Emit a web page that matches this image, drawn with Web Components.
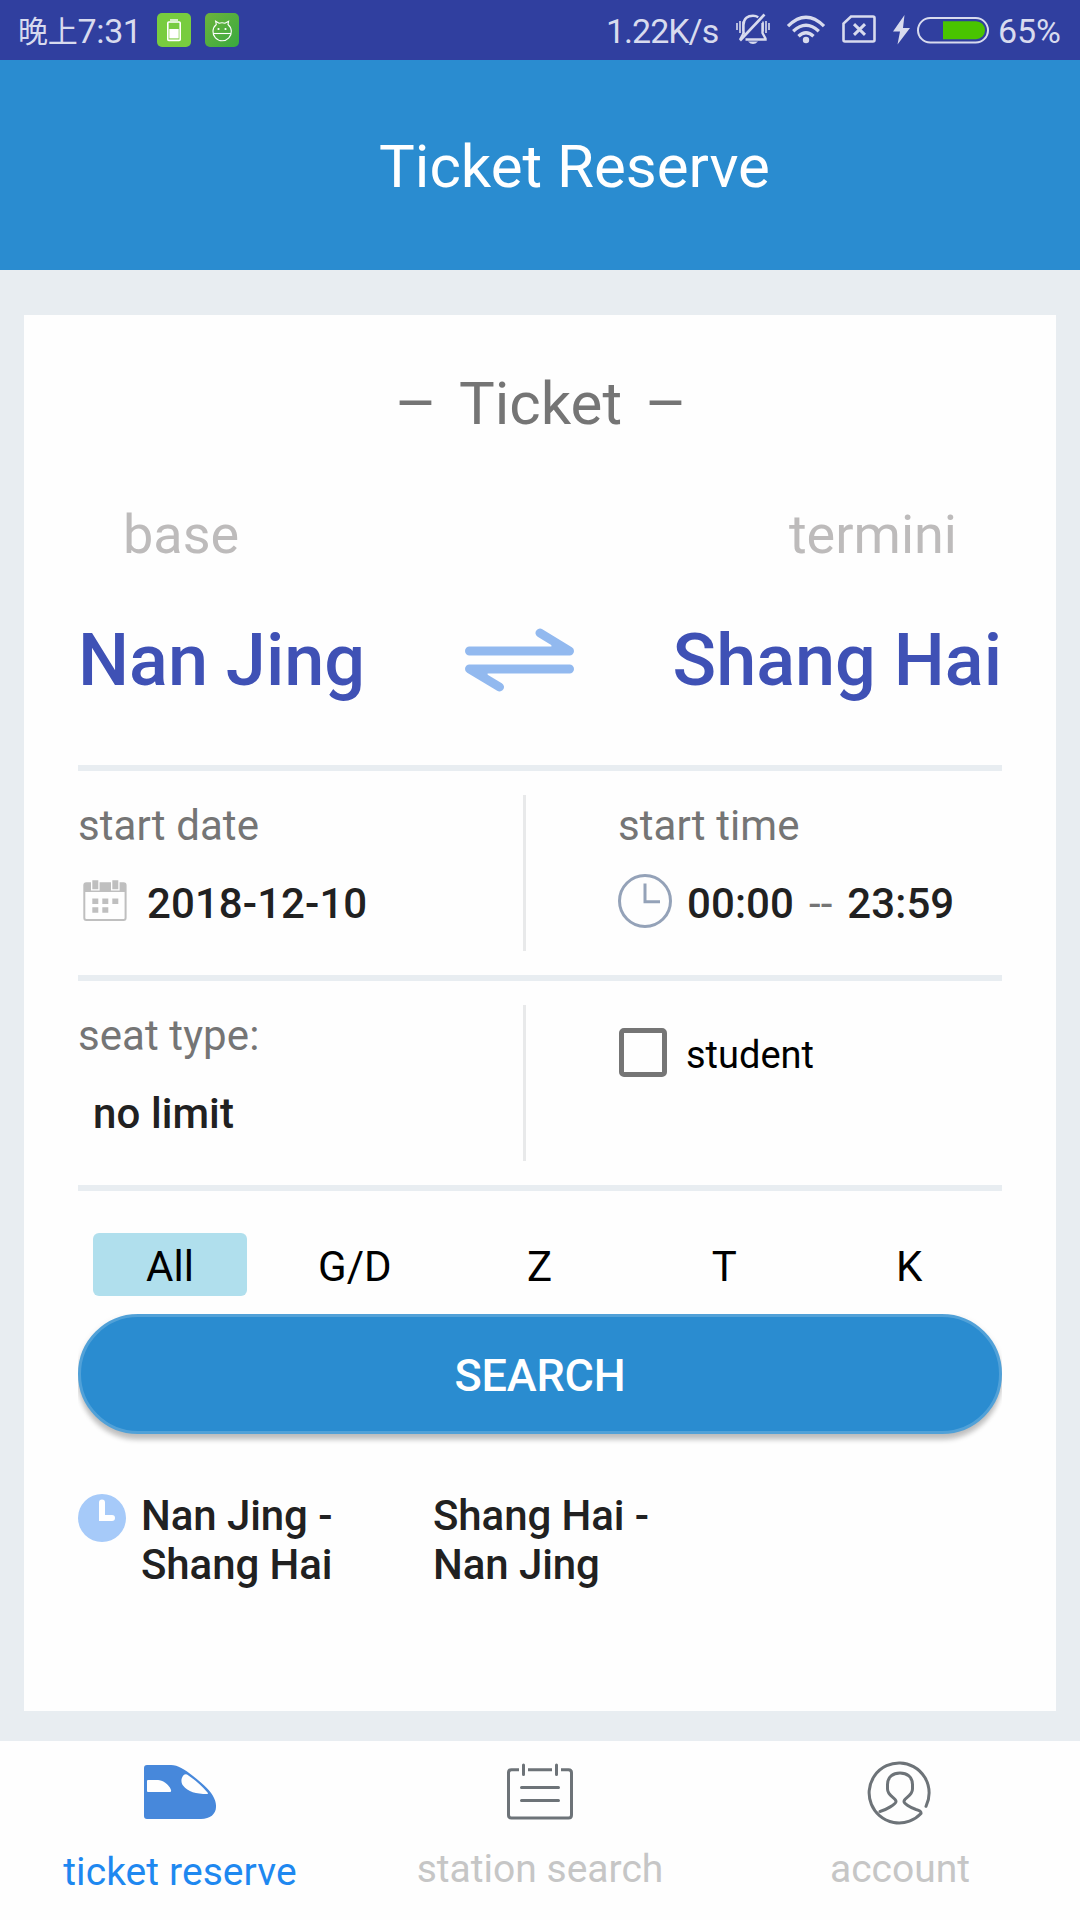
<!DOCTYPE html>
<html lang="en">
<head>
<meta charset="utf-8">
<title>Ticket Reserve</title>
<style>
html, body { margin: 0; padding: 0; }
body { width: 1080px; height: 1920px; overflow: hidden; background: #e8edf1; font-family: Roboto, "Noto Sans CJK SC", sans-serif; }
</style>
</head>
<body>
<ticket-app></ticket-app>
<script>
function define(name, html) {
  const template = document.createElement('template');
  template.innerHTML = html;
  customElements.define(name, class extends HTMLElement {
    constructor() {
      super();
      this.attachShadow({ mode: 'open' }).appendChild(template.content.cloneNode(true));
    }
  });
}

define('status-bar', `
<style>
:host { display: flex; align-items: center; height: 60px; box-sizing: border-box; background: #303f9f; color: #d8dbee; font-size: 34px; line-height: 60px; white-space: nowrap; }
svg { display: block; flex: none; }
.clock { display: flex; width: 119px; margin-left: 18px; padding-top: 1px; }
.zh { font-family: "Noto Sans CJK SC", sans-serif; font-size: 30px; line-height: 57px; width: 60px; letter-spacing: -0.2px; }
.num { letter-spacing: -0.4px; }
.speed { margin-left: auto; width: 116px; padding-top: 2px; letter-spacing: -1px; }
.pct { width: 65px; margin: 0 17px 0 9px; padding-top: 2px; letter-spacing: -0.1px; }
</style>
<div class="clock"><span class="zh">晚上</span><span class="num">7:31</span></div>
<svg style="margin-left:20px" width="34" height="34" viewBox="0 0 34 34"><rect width="34" height="34" rx="5" fill="#78cc3f"/><rect x="10.800" y="9" width="12.400" height="18.400" rx="1" fill="none" stroke="#fff" stroke-width="1.600"/><path d="M13 7h8" stroke="#fff" stroke-width="1.400"/><rect x="12.300" y="16" width="9.400" height="9.400" fill="#fff"/></svg>
<svg style="margin-left:14px" width="34" height="34" viewBox="0 0 34 34"><defs><linearGradient id="g" x1="0" y1="0" x2="1" y2="1"><stop offset="0" stop-color="#6db33b"/><stop offset="1" stop-color="#38aa40"/></linearGradient></defs><rect width="34" height="34" rx="5" fill="url(#g)"/><g fill="none" stroke="#fff" stroke-width="1.100"><path d="M11.300 11.500 10.600 8.200 14 10.200Q17 9.200 20 10.200L23.600 8.200 23 11.500A9.200 9.200 0 1 1 11.300 11.500Z"/><path d="M8.300 20.500H25.900"/></g><circle cx="13.500" cy="16" r="1.100" fill="#fff"/><circle cx="20.500" cy="16" r="1.100" fill="#fff"/></svg>
<span class="speed">1.22K/s</span>
<svg style="margin-left:14px" width="34" height="34" viewBox="0 0 34 34" fill="none" stroke="#d8dbee"><path d="M1 10v7M4 8v12M7 8.500v10M33 10v7M30 8v12M27 8.500v10" stroke-width="1.600"/><path d="M7.500 21V12C7.500 5 12 2.800 17 2.800Q20 2.800 22.300 4.200M26.500 10V20L29.500 25.500V26.500H9.500" stroke-width="2.400"/><path d="M28.500 1.500 4 27.500" stroke-width="2.600"/><path d="M4 26.500 8 19" stroke-width="2"/><path d="M12 28.500H22Q17 33.500 12 28.500Z" fill="#d8dbee" stroke="none"/></svg>
<svg style="margin-left:16px" width="40" height="34" viewBox="0 0 40 34" fill="none" stroke="#d8dbee" stroke-width="3.300"><path d="M2 13.200Q20-4.600 38 13.200M7.200 18.200Q20 6.200 32.800 18.200M12.500 23.200Q20 16.200 27.500 23.200"/><circle cx="20" cy="27" r="3.200" fill="#d8dbee" stroke="none"/></svg>
<svg style="margin-left:16px" width="34" height="34" viewBox="0 0 34 34" fill="none" stroke="#d8dbee"><path d="M9 3.500H31Q32.500 3.500 32.500 5V27Q32.500 28.500 31 28.500H3Q1.500 28.500 1.500 27V10.500Z" stroke-width="2.600"/><path d="M12 11.200 23 21.800M23 11.200 12 21.800" stroke-width="3"/></svg>
<svg style="margin-left:17px" width="17" height="34" viewBox="0 0 17 34"><path d="M11.500 2 0 18.500H7L4.500 31.500 17 15H10Z" fill="#d8dbee"/></svg>
<svg style="margin-left:7px" width="72" height="34" viewBox="0 0 72 34"><rect x="1" y="5" width="70" height="24.500" rx="12.250" fill="none" stroke="#d8dbee" stroke-width="2"/><path d="M26 8.200H59A9 9 0 0 1 59 26.200H26Z" fill="#49c400"/></svg>
<span class="pct">65%</span>
`);

define('app-header', `
<style>
:host { display: flex; align-items: center; justify-content: center; height: 210px; box-sizing: border-box; padding: 3px 0 0 69px; background: #2a8cd0; color: #fff; font-size: 60px; line-height: 70px; }
</style>
<slot></slot>
`);

define('swap-icon', `
<style>:host { display: block; margin: 0 0 2px 1px; } svg { display: block; }</style>
<svg width="109" height="66" viewBox="0 0 109 66" fill="none" stroke="#92b9ef" stroke-width="9" stroke-linecap="round" stroke-linejoin="round"><path d="M4.500 24H104.500L75 6M104.500 42H4.500L34.500 60"/><path d="M90 19 98 24M11 42 19 47" stroke-width="7"/></svg>
`);

define('calendar-icon', `
<style>:host { display: block; } svg { display: block; }</style>
<svg width="54" height="54" viewBox="0 0 54 54"><path d="M6.300 9H47.500V18H6.300Z" fill="#bfbfbf"/><rect x="6.300" y="9.300" width="41.300" height="36.800" rx="2" fill="none" stroke="#bfbfbf" stroke-width="2"/><path d="M13 6h8.600v10.500H13ZM33 6h8.600v10.500H33Z" fill="#fefefe"/><path d="M14.300 6.300h6v9h-6ZM34.300 6.300h6v9h-6ZM14.300 24.500h6v5.500h-6ZM24.300 24.500h6v5.500h-6ZM34.300 24.500h6v5.500h-6ZM14.300 33.300h6v5.500h-6ZM24.300 33.300h6v5.500h-6Z" fill="#bfbfbf"/></svg>
`);

define('clock-icon', `
<style>:host { display: block; } svg { display: block; }</style>
<svg width="54" height="54" viewBox="0 0 54 54" fill="none" stroke="#94a2b8" stroke-width="3"><circle cx="27" cy="27" r="25.500"/><path d="M27 9.500V27.700H42"/></svg>
`);

define('info-row', `
<style>
:host { display: flex; height: 204px; box-sizing: border-box; }
.left { width: 445px; }
.bar { width: 3px; margin: 24px 0; background: #e8e9ea; }
.right { flex: 1; padding-left: 92px; }
</style>
<div class="left"><slot name="left"></slot></div><div class="bar"></div><div class="right"><slot name="right"></slot></div>
`);

define('info-field', `
<style>
:host { display: flex; flex-direction: column; gap: 29px; padding-top: 30px; font-size: 42px; line-height: 49px; color: #757575; letter-spacing: 0.08px; }
.value { display: flex; align-items: center; gap: 15px; height: 49px; white-space: nowrap; }
::slotted([slot=icon]) { margin-bottom: 6px; }
::slotted(b) { font-weight: 500; color: #212121; }
</style>
<div><slot name="label"></slot></div><div class="value"><slot name="icon"></slot><slot></slot></div>
`);

define('check-field', `
<style>
:host { display: flex; align-items: center; height: 146px; color: #000; font-size: 38px; line-height: 45px; }
.box { width: 48px; height: 49px; box-sizing: border-box; border: 5px solid #757575; border-radius: 5px; margin: 0 19px 4px 1px; }
.text { padding-top: 2px; }
</style>
<div class="box"></div><div class="text"><slot></slot></div>
`);

define('type-chips', `
<style>
:host { display: flex; margin-top: 42px; height: 63px; }
::slotted(span) { flex: 1; margin: 0 15.800px 0 15px; box-sizing: border-box; padding-top: 4px; line-height: 59px; text-align: center; font-size: 42px; color: #000; border-radius: 6px; }
::slotted(span.on) { background: #b0dfed; }
</style>
<slot></slot>
`);

define('search-button', `
<style>
:host { display: block; margin-top: 18px; height: 150px; overflow: hidden; }
button { display: block; width: 100%; height: 120px; box-sizing: border-box; padding: 3px 0 0; border: 3px solid #51a1d8; border-radius: 60px; background: #2a8cd0; box-shadow: 0 6px 5px rgba(0,0,0,.2), 0 2px 6px rgba(0,0,0,.1); color: #fff; font: 500 45px/110px Roboto, sans-serif; letter-spacing: -0.200px; text-align: center; }
</style>
<button><slot></slot></button>
`);

define('route-history', `
<style>
:host { display: flex; margin-top: 27px; color: #212121; font-size: 42px; line-height: 49px; font-weight: 500; letter-spacing: -0.080px; }
svg { display: block; margin: 3px 15px 0 0; flex: none; }
::slotted(span) { display: block; width: 222px; margin-right: 70px; }
</style>
<svg width="48" height="48" viewBox="0 0 48 48"><circle cx="24" cy="24" r="24" fill="#a6caf9"/><path d="M24 8.500V24H34" fill="none" stroke="#fff" stroke-width="6" stroke-linecap="round"/></svg>
<slot></slot>
`);

define('ticket-card', `
<style>
:host { display: flex; flex-direction: column; margin: 45px 24px 30px; height: 1396px; box-sizing: border-box; padding: 0 54px; background: #fefefe; }
.heading { display: flex; align-items: center; justify-content: center; gap: 24px; height: 177px; box-sizing: border-box; padding-left: 1px; font-size: 60px; line-height: 70px; color: #757575; }
.dash { transform: scaleX(1.080); }
.labels { display: flex; align-items: center; justify-content: space-between; height: 85px; padding: 0 45px; font-size: 54px; line-height: 64px; color: #bdbbbb; }
.cities { display: flex; align-items: center; justify-content: space-between; height: 167px; margin-bottom: 21px; font-size: 72px; font-weight: 500; line-height: 84px; color: #3f51b5; }
hr { flex: none; width: 100%; height: 6px; margin: 0; border: 0; background: #e8edf1; }
.indent { margin-left: 15px; }
</style>
<div class="heading"><span class="dash">–</span><span>Ticket</span><span class="dash">–</span></div>
<div class="labels"><span>base</span><span>termini</span></div>
<div class="cities"><span>Nan Jing</span><swap-icon></swap-icon><span>Shang Hai</span></div>
<hr>
<info-row>
  <info-field slot="left"><span slot="label">start date</span><calendar-icon slot="icon"></calendar-icon><b>2018-12-10</b></info-field>
  <info-field slot="right"><span slot="label">start time</span><clock-icon slot="icon"></clock-icon><b>00:00</b><span>--</span><b>23:59</b></info-field>
</info-row>
<hr>
<info-row>
  <info-field slot="left"><span slot="label">seat type:</span><b class="indent">no limit</b></info-field>
  <check-field slot="right">student</check-field>
</info-row>
<hr>
<type-chips><span class="on">All</span><span>G/D</span><span>Z</span><span>T</span><span>K</span></type-chips>
<search-button>SEARCH</search-button>
<route-history><span>Nan Jing - Shang Hai</span><span>Shang Hai - Nan Jing</span></route-history>
`);

define('tab-item', `
<style>
:host { display: flex; flex-direction: column; align-items: center; flex: 1; padding-top: 19px; font-size: 39px; line-height: 47px; color: #c6c6c6; }
:host([active]) { color: #1e88f0; letter-spacing: 0.080px; }
.label { margin-top: 20px; }
:host([active]) .label { margin-top: 23px; }
</style>
<slot name="icon"></slot><div class="label"><slot></slot></div>
`);

define('tab-bar', `
<style>
:host { display: flex; height: 179px; background: #fefefe; }
svg { display: block; }
</style>
<tab-item active>
  <svg slot="icon" width="72" height="66" viewBox="0 0 72 66"><path fill-rule="evenodd" fill="#4788db" d="M3 5H27C34 5 40 9 49 16C58 23 67 31 70 38C72 42 72 45 72 47C72 54 66 59 57 59H3Q0 59 0 56V8Q0 5 3 5ZM3 21V31Q3 32 4 32H26Q27.500 32 27 30C25 24 18 20 14 20H4Q3 20 3 21ZM40.500 14.500C37 17 36.500 22 39 25.500C44 32 52 34 63 34Q64.500 34 63.500 32.500C56 24 50 19 43 14.500Q42 14 40.500 14.500Z"/></svg>ticket reserve
</tab-item>
<tab-item>
  <svg slot="icon" width="68" height="66" viewBox="0 0 68 66" fill="none" stroke="#6d7378" stroke-width="3" stroke-linecap="round"><path stroke-linecap="butt" d="M13 9.700H5.500Q2.500 9.700 2.500 12.700V55Q2.500 58 5.500 58H62.500Q65.500 58 65.500 55V12.700Q65.500 9.700 62.500 9.700H55M22 9.700H46"/><path d="M17.500 5V14.500M50.500 5V14.500M15.500 27.500H52.500M15.500 40.500H52.500"/></svg>station search
</tab-item>
<tab-item>
  <svg slot="icon" width="68" height="66" viewBox="0 1 68 66" fill="none" stroke="#6d7378" stroke-width="3" stroke-linecap="round" stroke-linejoin="round"><path d="M60 47.300A30 30 0 1 0 55 54.500Q55.500 52 50 50.500C44 48.500 38 44.500 38 42.500C38 39 46.500 37 46.500 30V25.500C46.500 18 41 14 34 14S21.500 18 21.500 25.500V30C21.500 37 30 39 30 42.500C30 45 20 51 14 52.500"/></svg>account
</tab-item>
`);

define('ticket-app', `
<style>:host { display: flex; flex-direction: column; width: 1080px; height: 1920px; }
status-bar, app-header, ticket-card, tab-bar { flex: none; }</style>
<status-bar></status-bar>
<app-header>Ticket Reserve</app-header>
<ticket-card></ticket-card>
<tab-bar></tab-bar>
`);
</script>
</body>
</html>
